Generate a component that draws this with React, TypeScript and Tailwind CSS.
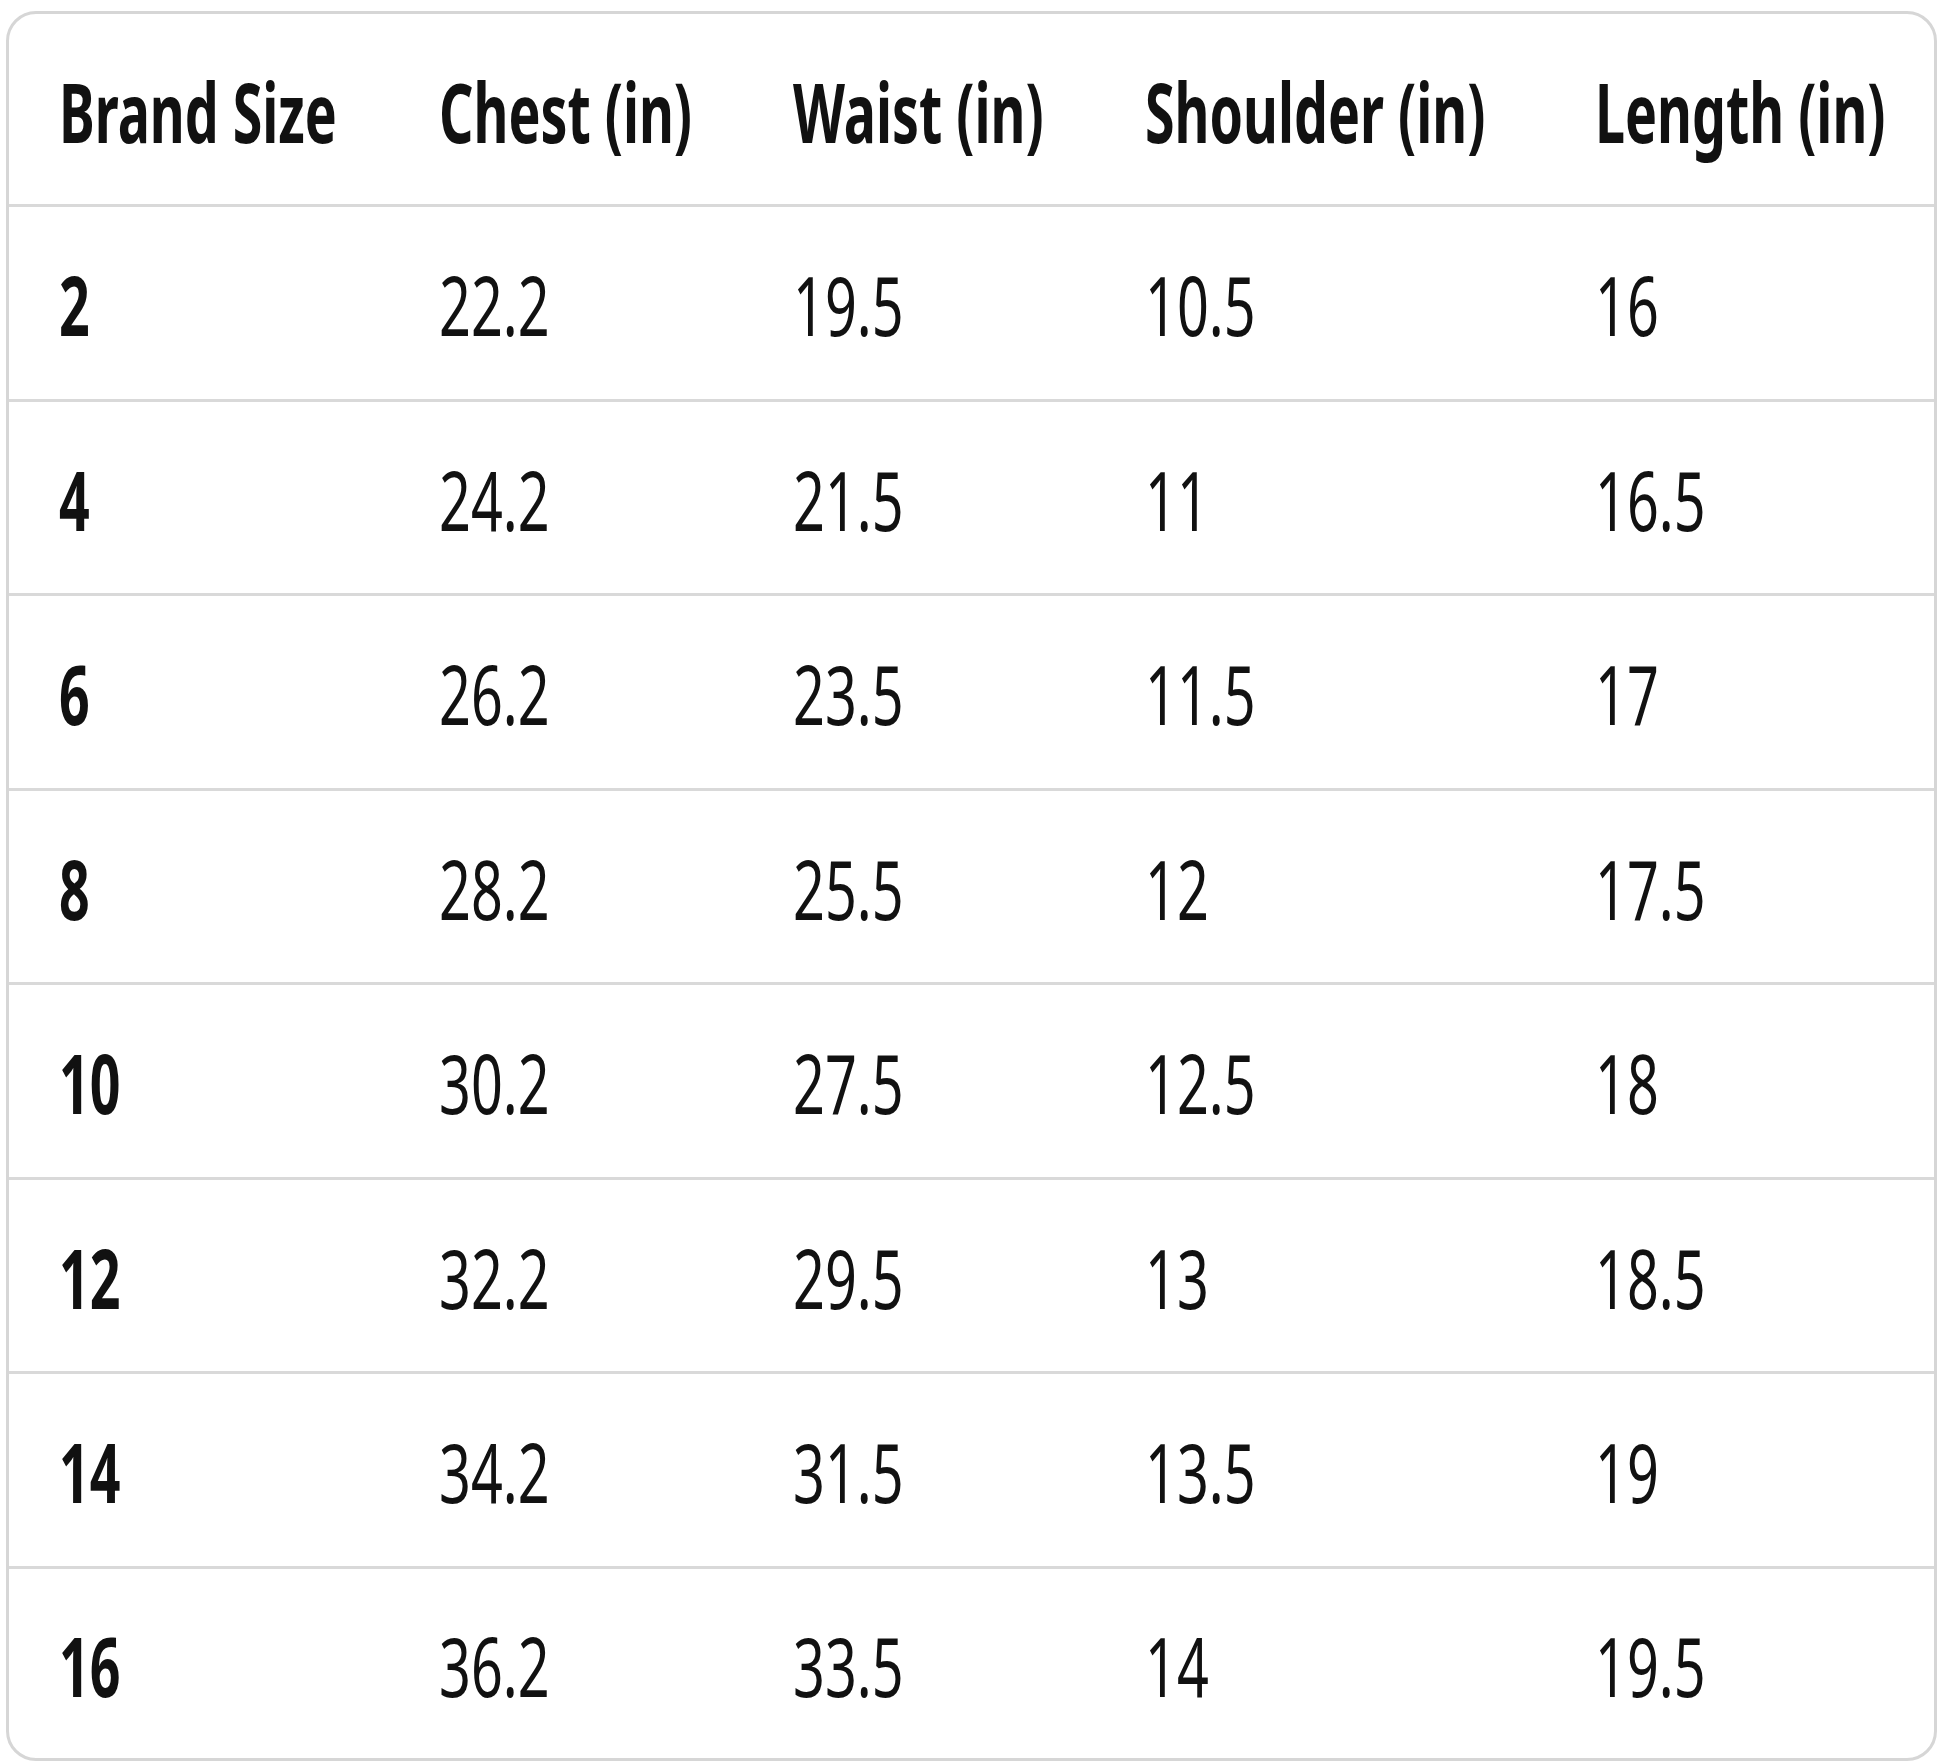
import React from "react";

const headers = ["Brand Size", "Chest (in)", "Waist (in)", "Shoulder (in)", "Length (in)"];
const rows: string[][] = [
  ["2", "22.2", "19.5", "10.5", "16"],
  ["4", "24.2", "21.5", "11", "16.5"],
  ["6", "26.2", "23.5", "11.5", "17"],
  ["8", "28.2", "25.5", "12", "17.5"],
  ["10", "30.2", "27.5", "12.5", "18"],
  ["12", "32.2", "29.5", "13", "18.5"],
  ["14", "34.2", "31.5", "13.5", "19"],
  ["16", "36.2", "33.5", "14", "19.5"],
];

function Cell({ text, bold }: { text: string; bold?: boolean }) {
  return (
    <div className="flex items-center pl-[50px] pt-[3px]">
      <span
        className={
          bold
            ? "inline-block origin-left scale-x-[0.655] whitespace-nowrap text-[82px] leading-none font-bold text-[#111111]"
            : "inline-block origin-left scale-x-[0.68] whitespace-nowrap text-[82px] leading-none font-normal text-[#111111]"
        }
      >
        {text}
      </span>
    </div>
  );
}

export default function App() {
  return (
    <div
      className="w-[1946px] h-[1764px] bg-white pl-[6px] pt-[11px] pr-[9px]"
      style={{ fontFamily: '"Noto Sans", "Open Sans", sans-serif' }}
    >
      <div className="w-[1931px] h-[1750px] border-[3px] border-[#d6d6d6] rounded-[30px] overflow-hidden bg-white flex flex-col">
        <div className="grid grid-cols-[380px_354px_352px_450px_1fr] h-[193px] border-b-[3px] border-[#d9d9d9]">
          {headers.map((h) => (
            <Cell key={h} text={h} bold />
          ))}
        </div>
        {rows.map((r, i) => (
          <div
            key={i}
            className={
              i === rows.length - 1
                ? "grid grid-cols-[380px_354px_352px_450px_1fr] flex-1"
                : "grid grid-cols-[380px_354px_352px_450px_1fr] h-[194.5px] border-b-[3px] border-[#d9d9d9]"
            }
          >
            {r.map((c, j) => (
              <Cell key={j} text={c} bold={j === 0} />
            ))}
          </div>
        ))}
      </div>
    </div>
  );
}
